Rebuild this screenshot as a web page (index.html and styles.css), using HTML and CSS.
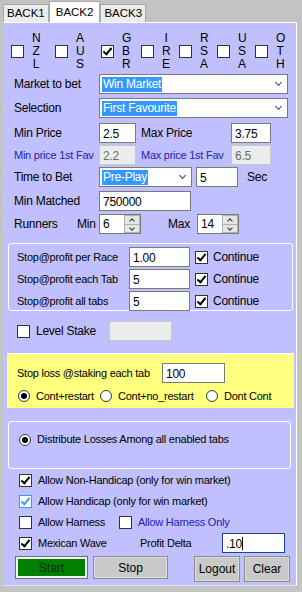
FILE: index.html
```html
<!DOCTYPE html>
<html lang="en">
<head>
    <meta charset="UTF-8">
    <title>Back Settings</title>
    <link rel="stylesheet" href="styles.css">
</head>
<body>
<div class="tabs">
    <div class="tab">BACK1</div>
    <div class="tab active">BACK2</div>
    <div class="tab">BACK3</div>
</div>
<div class="panel">
    <div class="countries">
        <div class="country"><span class="cb"></span><span class="letters">N<br>Z<br>L</span></div>
        <div class="country"><span class="cb"></span><span class="letters">A<br>U<br>S</span></div>
        <div class="country"><span class="cb on"></span><span class="letters">G<br>B<br>R</span></div>
        <div class="country"><span class="cb"></span><span class="letters">I<br>R<br>E</span></div>
        <div class="country"><span class="cb"></span><span class="letters">R<br>S<br>A</span></div>
        <div class="country"><span class="cb"></span><span class="letters">U<br>S<br>A</span></div>
        <div class="country"><span class="cb"></span><span class="letters">O<br>T<br>H</span></div>
    </div>

    <div class="form">
        <div class="row">
            <span class="lbl">Market to bet</span>
            <div class="select wide"><span class="sel">Win Market</span><span class="chev"></span></div>
        </div>
        <div class="row">
            <span class="lbl">Selection</span>
            <div class="select wide"><span class="sel">First Favourite</span><span class="chev"></span></div>
        </div>
        <div class="row">
            <span class="lbl">Min Price</span>
            <div class="box w37">2.5</div>
            <span class="lbl2">Max Price</span>
            <div class="box w40">3.75</div>
        </div>
        <div class="row blue">
            <span class="lbl">Min price 1st Fav</span>
            <div class="box w37 off">2.2</div>
            <span class="lbl2">Max price 1st Fav</span>
            <div class="box w40 off">6.5</div>
        </div>
        <div class="row">
            <span class="lbl">Time to Bet</span>
            <div class="select short"><span class="sel">Pre-Play</span><span class="chev"></span></div>
            <div class="box secs">5</div>
            <span class="sec">Sec</span>
        </div>
        <div class="row">
            <span class="lbl">Min Matched</span>
            <div class="box matched">750000</div>
        </div>
        <div class="row">
            <span class="runners">Runners</span>
            <span class="minlbl">Min</span>
            <div class="spin"><span>6</span><span class="arrows"><i class="up"></i><i class="down"></i></span></div>
            <span class="maxlbl">Max</span>
            <div class="spin"><span>14</span><span class="arrows"><i class="up"></i><i class="down"></i></span></div>
        </div>
    </div>

    <div class="group stops">
        <div class="srow">
            <span class="slbl">Stop@profit per Race</span>
            <div class="box w61">1.00</div>
            <span class="cb on"></span><span class="cont">Continue</span>
        </div>
        <div class="srow">
            <span class="slbl">Stop@profit each Tab</span>
            <div class="box w61">5</div>
            <span class="cb on"></span><span class="cont">Continue</span>
        </div>
        <div class="srow">
            <span class="slbl">Stop@profit all tabs</span>
            <div class="box w61">5</div>
            <span class="cb on"></span><span class="cont">Continue</span>
        </div>
    </div>

    <div class="level">
        <span class="cb"></span><span class="levtxt">Level Stake</span>
        <div class="box off levbox"></div>
    </div>

    <div class="yellow">
        <div class="yrow">
            <span class="ylbl">Stop loss @staking each tab</span>
            <div class="box w63">100</div>
        </div>
        <div class="radios">
            <span class="rb on"></span><span class="r1">Cont+restart</span>
            <span class="rb"></span><span class="r2">Cont+no_restart</span>
            <span class="rb"></span><span>Dont Cont</span>
        </div>
    </div>

    <div class="group dist">
        <span class="rb on"></span><span>Distribute Losses Among all enabled tabs</span>
    </div>

    <div class="allow">
        <div class="arow"><span class="cb on"></span><span>Allow Non-Handicap (only for win market)</span></div>
        <div class="arow"><span class="cb on hov"></span><span>Allow Handicap (only for win market)</span></div>
        <div class="arow">
            <span class="cb"></span><span class="harness">Allow Harness</span>
            <span class="cb"></span><span class="bluetxt">Allow Harness Only</span>
        </div>
        <div class="arow">
            <span class="cb on"></span><span class="mexican">Mexican Wave</span>
            <span class="delta">Profit Delta</span>
            <div class="box w63 focus">.10<span class="caret"></span></div>
        </div>
    </div>

    <div class="buttons">
        <button class="btn start">Start</button>
        <button class="btn stop">Stop</button>
        <button class="btn small logout">Logout</button>
        <button class="btn small">Clear</button>
    </div>
</div>
</body>
</html>
```

FILE: styles.css
```css
body { margin: 0; background: #c3c3c3; font-family: "Liberation Sans", Arial, sans-serif; font-size: 11px; letter-spacing: -0.25px; color: #000; width: 302px; height: 592px; overflow: hidden; white-space: nowrap; }

.tabs { display: flex; align-items: flex-end; height: 22px; padding-left: 3px; }
.tab { height: 17px; line-height: 17px; padding: 0 3px; border: 1px solid #a9a9a9; border-bottom: none; background: #ececec; font-size: 11.5px; letter-spacing: 0; margin-top: 4px; }
.tab.active { height: 21px; line-height: 20px; background: #fff; padding: 0 6px; margin-top: 0; position: relative; top: 1px; z-index: 1; }

.panel { margin-left: 3px; width: 292px; height: 562px; background: #c0c0ff; border: 1px solid #fff; border-left-color: #c0c0ff; border-bottom-color: #e3e3e3; }

.countries { display: grid; grid-template-columns: 44px 46px 40px 38px 38px 38px 38px; padding: 6px 0 0 7px; height: 45px; font-size: 12px; }
.country { display: flex; align-items: center; }
.letters { line-height: 13px; margin-left: 8px; text-align: center; width: 8px; }

.cb { width: 13px; height: 13px; box-sizing: border-box; border: 1px solid #333; background: #fff; display: inline-block; flex: none; position: relative; }
.cb.on::after { content: ""; position: absolute; left: 3px; top: 0px; width: 3px; height: 7px; border: solid #000; border-width: 0 2px 2px 0; transform: rotate(40deg); }
.cb.hov { border-color: #3399ff; }
.cb.hov::after { border-color: #3aa0e8; }

.rb { width: 12px; height: 12px; box-sizing: border-box; border: 1px solid #333; border-radius: 50%; background: #fff; display: inline-block; flex: none; position: relative; }
.rb.on::after { content: ""; position: absolute; left: 2px; top: 2px; width: 6px; height: 6px; border-radius: 50%; background: #000; }

.box { height: 20px; box-sizing: border-box; border: 1px solid #7a7a7a; background: #fff; padding: 2px 3px 0; line-height: 16px; font-size: 12px; }
.box.off { background: #ececec; border-color: #c8c8c8; color: #6d6d6d; }
.box.focus { border-color: #1f3f8f; }
.caret { display: inline-block; width: 1px; height: 13px; background: #000; vertical-align: -2px; }

.form { display: grid; grid-template-rows: 24px 25px 22px 22px 24px 23px 24px; padding-left: 10px; font-size: 12px; }
.row { display: flex; align-items: flex-start; }
.row .lbl, .row .lbl2, .row .sec, .row .runners, .row .minlbl, .row .maxlbl { line-height: 20px; }
.lbl { width: 85px; }
.blue .lbl, .blue .lbl2 { font-size: 11px; }
.lbl2 { width: 90px; margin-left: 5px; }
.blue { color: #2222b8; }
.w37 { width: 37px; }
.w40 { width: 40px; }
.w61 { width: 61px; }
.w63 { width: 63px; }

.select { height: 20px; box-sizing: border-box; border: 1px solid #7a7a7a; background: #fff; display: flex; align-items: center; padding-left: 2px; position: relative; }
.select.wide { width: 189px; }
.select.short { width: 93px; }
.sel { background: #3399ff; color: #fff; line-height: 15px; padding: 0 1px; }
.chev { position: absolute; right: 6px; top: 5px; width: 4px; height: 4px; border: solid #444; border-width: 0 1.5px 1.5px 0; transform: rotate(45deg); }

.secs { width: 42px; margin-left: 4px; }
.sec { margin-left: 9px; }
.matched { width: 92px; }
.runners { width: 63px; }
.minlbl { width: 22px; }
.maxlbl { width: 29px; margin-left: 27px; }
.spin { width: 42px; height: 20px; display: flex; justify-content: space-between; align-items: center; padding-left: 3px; box-sizing: border-box; background: #fff; border: 1px solid #7a7a7a; }
.arrows { width: 16px; height: 18px; display: flex; flex-direction: column; box-sizing: border-box; }
.arrows i { flex: 1; background: #e6e6e6; border: 1px solid #b0b0b0; position: relative; }
.arrows i + i { border-top: none; }
.arrows i::after { content: ""; position: absolute; left: 5px; width: 3px; height: 3px; border: solid #333; border-width: 1.5px 0 0 1.5px; }
.arrows .up::after { top: 3px; transform: rotate(45deg); }
.arrows .down::after { top: 1px; transform: rotate(225deg); }

.group { border: 1px solid #fff; border-radius: 3px; margin-left: 4px; width: 283px; }
.stops { margin-top: 5px; height: 63px; padding-top: 3px; box-sizing: content-box; }
.srow { display: flex; align-items: center; height: 20px; margin-bottom: 2px; padding-left: 8px; }
.slbl { width: 112px; }
.srow .cb { margin-left: 5px; }
.srow .box { font-size: 12px; }
.cont { margin-left: 5px; font-size: 12px; }

.level { display: flex; align-items: center; height: 20px; margin-top: 10px; padding-left: 13px; }
.levtxt { margin-left: 6px; width: 73px; font-size: 12px; }
.levbox { width: 63px; }

.yellow { background: #ffff80; border-top: 1px solid #fff; margin: 12px 0 0 3px; width: 287px; height: 55px; box-sizing: border-box; }
.yrow { display: flex; align-items: center; height: 20px; margin-top: 9px; padding-left: 10px; }
.ylbl { width: 145px; }
.radios { display: flex; align-items: center; height: 20px; padding-left: 11px; margin-top: 3px; }
.radios .rb + span { margin-left: 6px; }
.r1 { width: 64px; }
.r2 { width: 88px; }

.dist { margin-top: 13px; height: 48px; box-sizing: border-box; display: flex; align-items: flex-start; padding: 11px 0 0 10px; }
.dist .rb { margin-right: 6px; margin-top: 1px; }

.allow { padding-left: 15px; margin-top: 1px; }
.arow { display: flex; align-items: center; height: 20px; margin-bottom: 1px; }
.arow .cb { margin-right: 6px; }
.harness { width: 81px; }
.bluetxt { color: #2222b8; }
.mexican { width: 102px; }
.delta { width: 82px; }

.buttons { display: flex; align-items: flex-start; padding: 2px 0 0 11px; }
.btn { font: inherit; font-size: 12px; height: 23px; border: 1px solid #8c8c8c; background: #c9c9c9; box-shadow: inset 0 0 0 1px #dcdcdc; padding: 0; margin-right: 5px; color: #000; }
.start { width: 73px; background: #008000; color: #0c2a0c; border-color: #6f6f6f; box-shadow: inset 0 0 0 2px #f4f4f4; }
.stop { width: 75px; }
.small { width: 46px; height: 26px; }
.logout { margin-left: 21px; margin-right: 4px; }
```
